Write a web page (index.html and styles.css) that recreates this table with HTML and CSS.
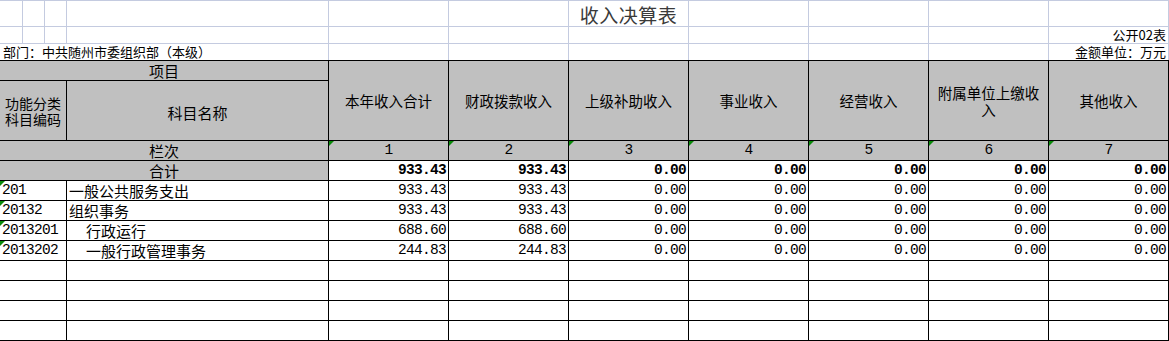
FILE: index.html
```html
<!DOCTYPE html>
<html lang="zh-CN">
<head>
<meta charset="utf-8">
<title>收入决算表</title>
<link rel="stylesheet" href="styles.css">
</head>
<body>
<div class="sheet">
  <div class="top">
    <div class="tc"></div><div class="tc"></div><div class="tc"></div><div class="tc"></div>
    <div class="tc"></div><div class="tc"></div><div class="tc title">收入决算表</div>
    <div class="tc"></div><div class="tc"></div><div class="tc"></div><div class="tc"></div>

    <div class="tc"></div><div class="tc"></div><div class="tc"></div><div class="tc"></div>
    <div class="tc"></div><div class="tc"></div><div class="tc"></div><div class="tc"></div>
    <div class="tc"></div><div class="tc"></div><div class="tc lbl right">公开02表</div>

    <div class="tc lbl span4">部门：中共随州市委组织部（本级）</div>
    <div class="tc"></div><div class="tc"></div><div class="tc"></div>
    <div class="tc"></div><div class="tc"></div><div class="tc"></div>
    <div class="tc lbl right">金额单位：万元</div>
  </div>

  <div class="grid">
    <div class="c hd span4">项目</div>
    <div class="c hd tall">本年收入合计</div>
    <div class="c hd tall">财政拨款收入</div>
    <div class="c hd tall">上级补助收入</div>
    <div class="c hd tall">事业收入</div>
    <div class="c hd tall">经营收入</div>
    <div class="c hd tall wrap">附属单位上缴收入</div>
    <div class="c hd tall">其他收入</div>

    <div class="c hd span3 two"><span class="ln">功能分类</span><span class="ln">科目编码</span></div>
    <div class="c hd low">科目名称</div>

    <div class="c hd span4">栏次</div>
    <div class="c hd idx tri">1</div>
    <div class="c hd idx tri">2</div>
    <div class="c hd idx tri">3</div>
    <div class="c hd idx tri">4</div>
    <div class="c hd idx tri">5</div>
    <div class="c hd idx tri">6</div>
    <div class="c hd idx tri">7</div>

    <div class="c hd span4">合计</div>
    <div class="c num bold">933.43</div>
    <div class="c num bold">933.43</div>
    <div class="c num bold">0.00</div>
    <div class="c num bold">0.00</div>
    <div class="c num bold">0.00</div>
    <div class="c num bold">0.00</div>
    <div class="c num bold">0.00</div>

    <div class="c code span3 tri">201</div>
    <div class="c name">一般公共服务支出</div>
    <div class="c num">933.43</div><div class="c num">933.43</div><div class="c num">0.00</div><div class="c num">0.00</div><div class="c num">0.00</div><div class="c num">0.00</div><div class="c num">0.00</div>

    <div class="c code span3 tri">20132</div>
    <div class="c name">组织事务</div>
    <div class="c num">933.43</div><div class="c num">933.43</div><div class="c num">0.00</div><div class="c num">0.00</div><div class="c num">0.00</div><div class="c num">0.00</div><div class="c num">0.00</div>

    <div class="c code span3 tri">2013201</div>
    <div class="c name ind">行政运行</div>
    <div class="c num">688.60</div><div class="c num">688.60</div><div class="c num">0.00</div><div class="c num">0.00</div><div class="c num">0.00</div><div class="c num">0.00</div><div class="c num">0.00</div>

    <div class="c code span3 tri">2013202</div>
    <div class="c name ind">一般行政管理事务</div>
    <div class="c num">244.83</div><div class="c num">244.83</div><div class="c num">0.00</div><div class="c num">0.00</div><div class="c num">0.00</div><div class="c num">0.00</div><div class="c num">0.00</div>

    <div class="c span3"></div><div class="c"></div><div class="c"></div><div class="c"></div><div class="c"></div><div class="c"></div><div class="c"></div><div class="c"></div><div class="c"></div>
    <div class="c span3"></div><div class="c"></div><div class="c"></div><div class="c"></div><div class="c"></div><div class="c"></div><div class="c"></div><div class="c"></div><div class="c"></div>
    <div class="c span3"></div><div class="c"></div><div class="c"></div><div class="c"></div><div class="c"></div><div class="c"></div><div class="c"></div><div class="c"></div><div class="c"></div>
    <div class="c span3"></div><div class="c"></div><div class="c"></div><div class="c"></div><div class="c"></div><div class="c"></div><div class="c"></div><div class="c"></div><div class="c"></div>
  </div>
</div>
</body>
</html>
```

FILE: styles.css
```css
html, body {
  margin: 0;
  padding: 0;
  background: #ffffff;
  overflow: hidden;
}

body {
  font-family: "Noto Sans CJK SC", "Noto Sans", sans-serif;
  color: #000;
}

.sheet {
  width: 1169px;
}

.top {
  display: grid;
  grid-template-columns: 22px 21px 21px 261px repeat(7, 119px);
  grid-template-rows: 25px 16px 16px;
  column-gap: 1px;
  row-gap: 1px;
  padding: 1px 1px 0 0;
  background: #c4cbe0;
}

.tc {
  background: #fff;
  display: flex;
  align-items: center;
  white-space: nowrap;
  overflow: visible;
}

.title {
  justify-content: center;
  align-items: flex-end;
  font-size: 19px;
  line-height: 22px;
  color: #3a3a3a;
  letter-spacing: 0.5px;
}

.lbl {
  font-size: 13px;
  line-height: 16px;
}

.right {
  justify-content: flex-end;
  padding-right: 2px;
}

.span4 {
  grid-column: span 4;
}

.span3 {
  grid-column: span 3;
}

.top .span4 {
  padding-left: 3px;
}

.grid {
  display: grid;
  grid-template-columns: 22px 21px 21px 261px repeat(7, 119px);
  grid-template-rows: 19px 59px 19px 19px repeat(8, 19px);
  gap: 1px;
  padding: 1px 1px 1px 0;
  background: #000;
}

.c {
  position: relative;
  background: #fff;
  display: flex;
  align-items: center;
  white-space: nowrap;
  font-size: 15px;
  line-height: 17px;
}

.hd {
  background: #c0c0c0;
  justify-content: center;
  text-align: center;
}

.tall {
  grid-row: span 2;
  font-size: 14.5px;
}

.wrap {
  white-space: normal;
  padding: 0 4px;
  line-height: 17px;
}

.two {
  flex-direction: column;
  justify-content: center;
  padding-top: 3px;
  font-family: "Liberation Sans", "Noto Sans CJK SC", sans-serif;
  font-size: 14.5px;
}

.ln {
  display: block;
  line-height: 16px;
  height: 16px;
  font-size: 14px;
}

.low {
  padding-top: 4px;
}

.idx {
  font-family: "Liberation Mono", monospace;
  font-size: 14.5px;
  letter-spacing: -0.7px;
}

.num {
  justify-content: flex-end;
  padding-right: 2px;
  font-family: "Liberation Mono", monospace;
  font-size: 14.5px;
  letter-spacing: -0.7px;
}

.bold {
  font-weight: bold;
}

.code {
  padding-left: 2px;
  font-family: "Liberation Mono", monospace;
  font-size: 14.5px;
  letter-spacing: -0.7px;
}

.name {
  padding-left: 2px;
}

.ind {
  padding-left: 19px;
}

.tri::before {
  content: "";
  position: absolute;
  left: 0;
  top: 0;
  width: 0;
  height: 0;
  border-top: 5px solid #0a8a0a;
  border-right: 5px solid transparent;
}
```
